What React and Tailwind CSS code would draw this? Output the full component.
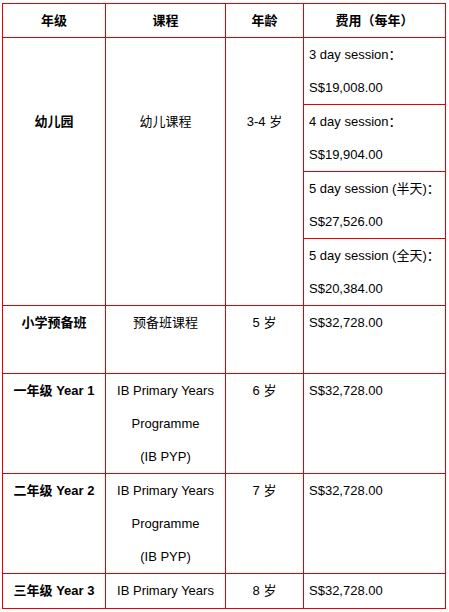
import React from "react";

const font = { fontFamily: '"Liberation Sans", "Noto Sans CJK SC", sans-serif' };

function Cell({ className = "", children }) {
  return <div className={`bg-white text-[13px] leading-[33px] text-black ${className}`}>{children}</div>;
}

export default function App() {
  const rows = [
    { grade: "小学预备班", course: ["预备班课程"], age: "5 岁" },
    { grade: "一年级 Year 1", course: ["IB Primary Years", "Programme", "(IB PYP)"], age: "6 岁" },
    { grade: "二年级 Year 2", course: ["IB Primary Years", "Programme", "(IB PYP)"], age: "7 岁" },
    { grade: "三年级 Year 3", course: ["IB Primary Years"], age: "8 岁" },
  ];
  const sessions = [
    ["3 day session：", "S$19,008.00"],
    ["4 day session：", "S$19,904.00"],
    ["5 day session (半天)：", "S$27,526.00"],
    ["5 day session (全天)：", "S$20,384.00"],
  ];

  return (
    <div className="min-h-screen bg-white pl-[2px] pt-[3px]" style={font}>
      <div className="grid w-fit gap-px bg-[#e60000] p-px grid-cols-[102px_119px_77px_141px] grid-rows-[33px_66px_66px_66px_66px_67px_99px_99px_34px]">
        <Cell className="flex items-center justify-center font-bold">年级</Cell>
        <Cell className="flex items-center justify-center font-bold">课程</Cell>
        <Cell className="flex items-center justify-center font-bold">年龄</Cell>
        <Cell className="flex items-center justify-center font-bold">费用（每年）</Cell>

        <Cell className="row-span-4 pt-[67px] text-center font-bold">幼儿园</Cell>
        <Cell className="row-span-4 pt-[67px] text-center">幼儿课程</Cell>
        <Cell className="row-span-4 pt-[67px] text-center">3-4 岁</Cell>
        {sessions.map(([label, price]) => (
          <Cell key={price} className="col-start-4 whitespace-nowrap pl-[5px]">
            <div>{label}</div>
            <div>{price}</div>
          </Cell>
        ))}

        {rows.map((r) => (
          <React.Fragment key={r.grade}>
            <Cell className="whitespace-nowrap text-center font-bold">{r.grade}</Cell>
            <Cell className="text-center">
              {r.course.map((c) => (
                <div key={c}>{c}</div>
              ))}
            </Cell>
            <Cell className="text-center">{r.age}</Cell>
            <Cell className="pl-[5px]">S$32,728.00</Cell>
          </React.Fragment>
        ))}
      </div>
    </div>
  );
}
